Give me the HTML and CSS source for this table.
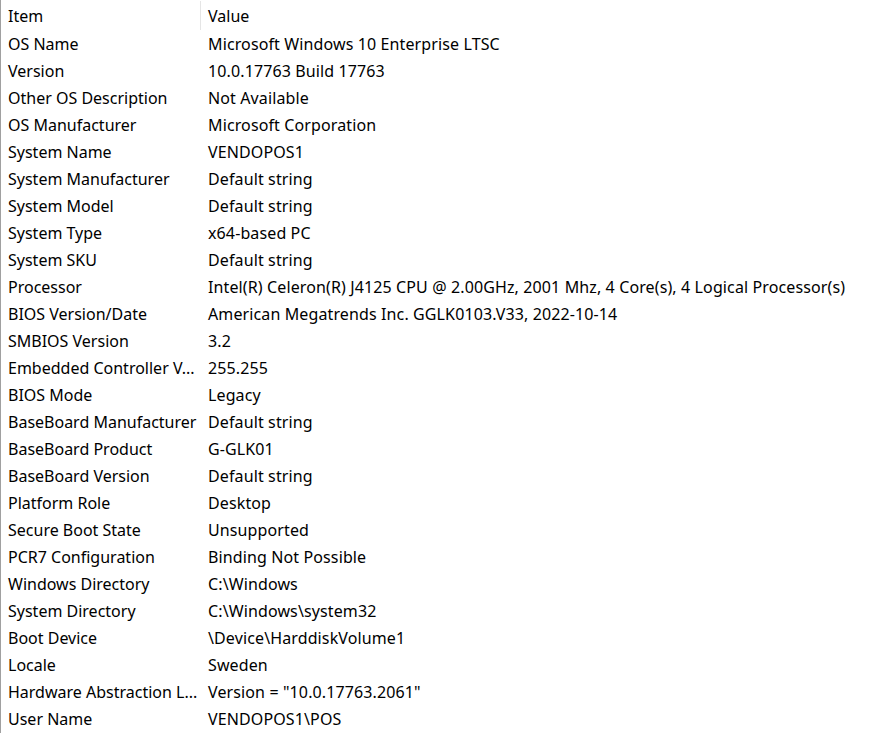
FILE: index.html
```html
<!DOCTYPE html>
<html>
<head>
<meta charset="utf-8">
<link rel="stylesheet" href="styles.css">
</head>
<body>
<div class="list">
  <div class="header">
    <div class="hcell c1">Item</div>
    <div class="hcell c2">Value</div>
  </div>
  <div class="rows">
    <div class="row"><span class="c1">OS Name</span><span class="c2">Microsoft Windows 10 Enterprise LTSC</span></div>
    <div class="row"><span class="c1">Version</span><span class="c2">10.0.17763 Build 17763</span></div>
    <div class="row"><span class="c1">Other OS Description</span><span class="c2">Not Available</span></div>
    <div class="row"><span class="c1">OS Manufacturer</span><span class="c2">Microsoft Corporation</span></div>
    <div class="row"><span class="c1">System Name</span><span class="c2">VENDOPOS1</span></div>
    <div class="row"><span class="c1">System Manufacturer</span><span class="c2">Default string</span></div>
    <div class="row"><span class="c1">System Model</span><span class="c2">Default string</span></div>
    <div class="row"><span class="c1">System Type</span><span class="c2">x64-based PC</span></div>
    <div class="row"><span class="c1">System SKU</span><span class="c2">Default string</span></div>
    <div class="row"><span class="c1">Processor</span><span class="c2">Intel(R) Celeron(R) J4125 CPU @ 2.00GHz, 2001 Mhz, 4 Core(s), 4 Logical Processor(s)</span></div>
    <div class="row"><span class="c1">BIOS Version/Date</span><span class="c2">American Megatrends Inc. GGLK0103.V33, 2022-10-14</span></div>
    <div class="row"><span class="c1">SMBIOS Version</span><span class="c2">3.2</span></div>
    <div class="row"><span class="c1">Embedded Controller V...</span><span class="c2">255.255</span></div>
    <div class="row"><span class="c1">BIOS Mode</span><span class="c2">Legacy</span></div>
    <div class="row"><span class="c1">BaseBoard Manufacturer</span><span class="c2">Default string</span></div>
    <div class="row"><span class="c1">BaseBoard Product</span><span class="c2">G-GLK01</span></div>
    <div class="row"><span class="c1">BaseBoard Version</span><span class="c2">Default string</span></div>
    <div class="row"><span class="c1">Platform Role</span><span class="c2">Desktop</span></div>
    <div class="row"><span class="c1">Secure Boot State</span><span class="c2">Unsupported</span></div>
    <div class="row"><span class="c1">PCR7 Configuration</span><span class="c2">Binding Not Possible</span></div>
    <div class="row"><span class="c1">Windows Directory</span><span class="c2">C:\Windows</span></div>
    <div class="row"><span class="c1">System Directory</span><span class="c2">C:\Windows\system32</span></div>
    <div class="row"><span class="c1">Boot Device</span><span class="c2">\Device\HarddiskVolume1</span></div>
    <div class="row"><span class="c1">Locale</span><span class="c2">Sweden</span></div>
    <div class="row"><span class="c1">Hardware Abstraction L...</span><span class="c2">Version = "10.0.17763.2061"</span></div>
    <div class="row"><span class="c1">User Name</span><span class="c2">VENDOPOS1\POS</span></div>
  </div>
</div>
</body>
</html>
```

FILE: styles.css
```css
html, body {
  margin: 0;
  padding: 0;
  background: #ffffff;
}
body {
  font-family: "Noto Sans", "Open Sans", sans-serif;
  font-size: 16px;
  color: #000000;
  height: 733px;
  overflow: hidden;
}
.list {
  border-left: 1px solid #a0a0a0;
  height: 733px;
  box-sizing: border-box;
}
.header {
  display: flex;
  height: 30px;
  align-items: stretch;
}
.hcell {
  display: flex;
  align-items: center;
  padding-top: 1px;
  box-sizing: border-box;
}
.header .c1 {
  width: 200px;
  padding-left: 7px;
  border-right: 1px solid #e5e5e5;
  margin: 1px 0 0 0;
}
.header .c2 {
  padding-left: 7px;
}
.row {
  display: flex;
  height: 27px;
  align-items: center;
  white-space: nowrap;
}
.row .c1 {
  width: 200px;
  padding-left: 7px;
  box-sizing: border-box;
  flex: none;
}
.row .c2 {
  padding-left: 7px;
  letter-spacing: 0.12px;
}
```
